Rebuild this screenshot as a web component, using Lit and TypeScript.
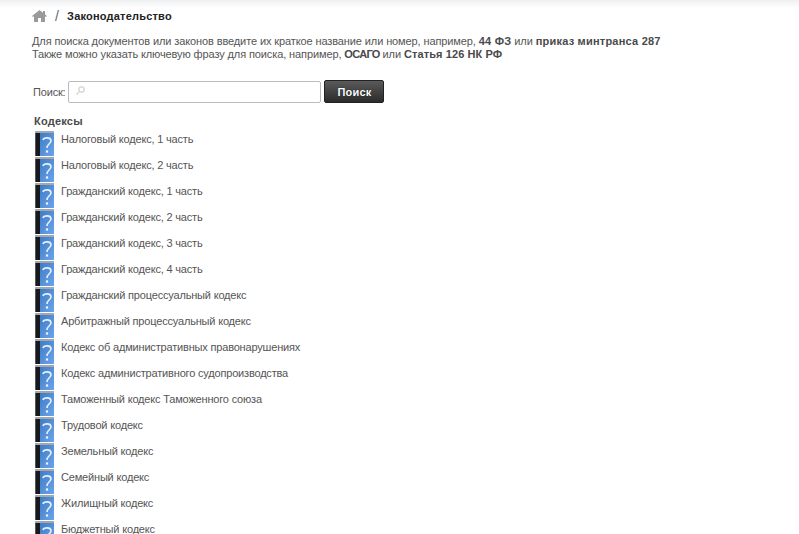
import { LitElement, html, css, svg } from "lit";
import { customElement } from "lit/decorators.js";

const codes = [
  "Налоговый кодекс, 1 часть",
  "Налоговый кодекс, 2 часть",
  "Гражданский кодекс, 1 часть",
  "Гражданский кодекс, 2 часть",
  "Гражданский кодекс, 3 часть",
  "Гражданский кодекс, 4 часть",
  "Гражданский процессуальный кодекс",
  "Арбитражный процессуальный кодекс",
  "Кодекс об административных правонарушениях",
  "Кодекс административного судопроизводства",
  "Таможенный кодекс Таможенного союза",
  "Трудовой кодекс",
  "Земельный кодекс",
  "Семейный кодекс",
  "Жилищный кодекс",
  "Бюджетный кодекс",
];

const book = svg`<svg class="book" width="20" height="26" viewBox="0 0 20 26">
  <defs><linearGradient id="bg" x1="0" y1="0" x2="1" y2="1"><stop offset="0" stop-color="#3f7cc6"/><stop offset="1" stop-color="#6aa4ec"/></linearGradient></defs>
  <rect x="0" y="0" width="19" height="2" fill="#a4a8ad"/>
  <rect x="0" y="2" width="5" height="23" fill="#17191c"/>
  <rect x="0" y="2" width="1" height="23" fill="#55585c"/>
  <rect x="5" y="2" width="14" height="23" fill="url(#bg)"/>
  <path d="M8 9c.6-2.6 7.6-3.2 8 .6.3 3-4 3.4-4 7.4" fill="none" stroke="#e8f1fb" stroke-width="1.6"/>
  <rect x="10.9" y="19.4" width="2.2" height="2.2" fill="#f2f7fd"/>
</svg>`;

@customElement("app-root")
export class AppRoot extends LitElement {
  static styles = css`
    :host { display: block; height: 534px; overflow: hidden; background: #fff; font-family: "Liberation Sans", Arial, sans-serif; font-size: 11px; letter-spacing: -0.18px; color: #555; }
    .shade { height: 8px; background: linear-gradient(#eff0f1, #fff); }
    .wrap { padding: 0 0 0 32px; }
    .crumbs { display: flex; align-items: center; height: 16px; font-weight: bold; color: #222; letter-spacing: 0.2px; }
    .sep { font-weight: normal; font-size: 14px; color: #5b6b7b; margin: 0 8px 0 8px; }
    .intro { margin: 11px 0 0; line-height: 13px; letter-spacing: -0.11px; }
    b { letter-spacing: 0.22px; color: #4a4a4a; }
    b.caps { letter-spacing: -0.7px; }
    b.mid { letter-spacing: 0.1px; }
    .search { display: flex; align-items: center; margin-top: 19px; gap: 1px; margin-left: 1px; }
    .input { box-sizing: border-box; width: 253px; height: 22px; border: 1px solid #bbb; border-radius: 2px; display: flex; align-items: center; padding: 0 0 3px 6px; background: #fff; margin-left: 2px; }
    .btn { margin-left: 2px; width: 60px; height: 23px; border: 1px solid #222; border-radius: 2px; background: linear-gradient(#5a5a5a, #2b2b2b); color: #fff; font: bold 11px "Liberation Sans", Arial, sans-serif; letter-spacing: 0.2px; text-shadow: 0 0 1px #000; }
    h3 { margin: 11px 0 0 2px; font-size: 11px; line-height: 14px; color: #4a4a4a; letter-spacing: 0.22px; }
    .row { display: flex; align-items: flex-start; height: 26px; margin-left: 3px; gap: 6px; }
    .row span { line-height: 14px; margin-top: 1px; }
    .book { flex: none; }
    .list { margin-top: 3px; }
  `;
  render() {
    return html`<div class="shade"></div><div class="wrap">
      <div class="crumbs">
        <svg width="15" height="12" viewBox="0 0 15 12"><path fill="#9a9a9a" d="M7.5 0 0 6l1 1 1-.8V12h4V8h3v4h4V6.2l1 .8 1-1-2-1.6V1h-2v1.8Z"/></svg>
        <span class="sep">/</span><span>Законодательство</span>
      </div>
      <p class="intro">Для поиска документов или законов введите их краткое название или номер, например, <b>44 ФЗ</b> или <b>приказ минтранса 287</b><br>Также можно указать ключевую фразу для поиска, например, <b class="caps">ОСАГО</b> или <b class="mid">Статья 126 НК РФ</b></p>
      <div class="search"><span>Поиск:</span>
        <div class="input"><svg width="11" height="11" viewBox="0 0 11 11"><circle cx="6.5" cy="4.5" r="2.7" fill="none" stroke="#d4d4d4" stroke-width="1.3"/><path d="M4.5 6.5 1.5 9.5" stroke="#d4d4d4" stroke-width="1.3"/></svg></div>
        <button class="btn">Поиск</button></div>
      <h3>Кодексы</h3>
      <div class="list">${codes.map((c) => html`<div class="row">${book}<span>${c}</span></div>`)}</div>
    </div>`;
  }
}
